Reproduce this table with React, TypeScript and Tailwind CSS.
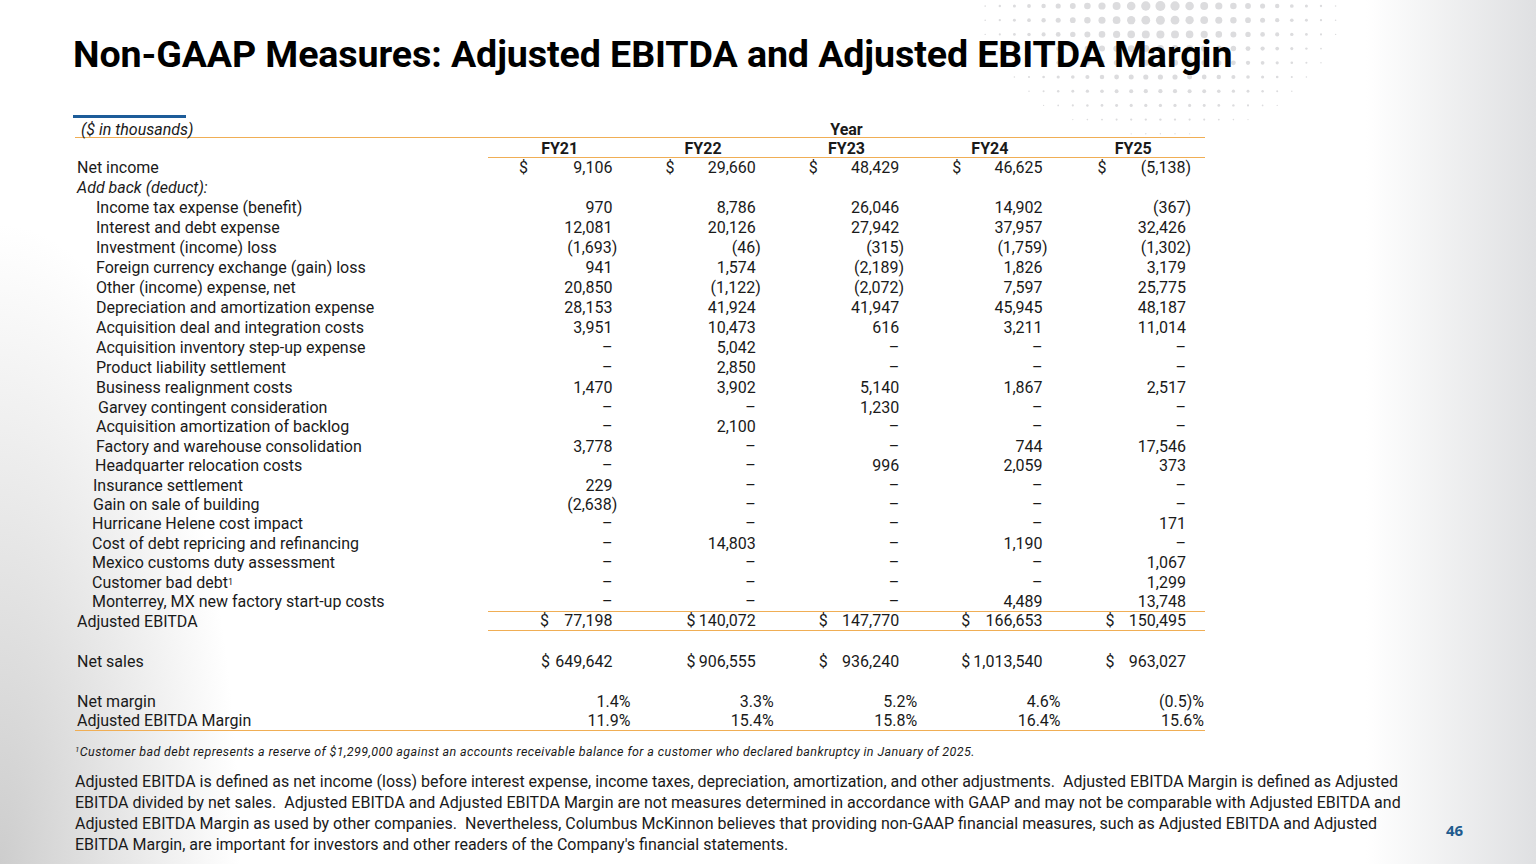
import React from "react";

type Cell = { v: string; d?: string; pct?: boolean };

const rows: { label: React.ReactNode; pl: string; h: string; cells: Cell[] }[] = [
  { label: "Net income", pl: "pl-[2px]", h: "h-[20px]", cells: [{ v: "9,106", d: "ml-[31px]" }, { v: "29,660", d: "ml-[34px]" }, { v: "48,429", d: "ml-[34px]" }, { v: "46,625", d: "ml-[34px]" }, { v: "(5,138)", d: "ml-[36px]" }] },
  { label: <i>Add back (deduct):</i>, pl: "pl-[2px]", h: "h-[20px]", cells: [] },
  { label: "Income tax expense (benefit)", pl: "pl-[21px]", h: "h-[20px]", cells: [{ v: "970" }, { v: "8,786" }, { v: "26,046" }, { v: "14,902" }, { v: "(367)" }] },
  { label: "Interest and debt expense", pl: "pl-[21px]", h: "h-[20px]", cells: [{ v: "12,081" }, { v: "20,126" }, { v: "27,942" }, { v: "37,957" }, { v: "32,426" }] },
  { label: "Investment (income) loss", pl: "pl-[21px]", h: "h-[20px]", cells: [{ v: "(1,693)" }, { v: "(46)" }, { v: "(315)" }, { v: "(1,759)" }, { v: "(1,302)" }] },
  { label: "Foreign currency exchange (gain) loss", pl: "pl-[21px]", h: "h-[20px]", cells: [{ v: "941" }, { v: "1,574" }, { v: "(2,189)" }, { v: "1,826" }, { v: "3,179" }] },
  { label: "Other (income) expense, net", pl: "pl-[21px]", h: "h-[20px]", cells: [{ v: "20,850" }, { v: "(1,122)" }, { v: "(2,072)" }, { v: "7,597" }, { v: "25,775" }] },
  { label: "Depreciation and amortization expense", pl: "pl-[21px]", h: "h-[20px]", cells: [{ v: "28,153" }, { v: "41,924" }, { v: "41,947" }, { v: "45,945" }, { v: "48,187" }] },
  { label: "Acquisition deal and integration costs", pl: "pl-[21px]", h: "h-[20px]", cells: [{ v: "3,951" }, { v: "10,473" }, { v: "616" }, { v: "3,211" }, { v: "11,014" }] },
  { label: "Acquisition inventory step-up expense", pl: "pl-[21px]", h: "h-[20px]", cells: [{ v: "–" }, { v: "5,042" }, { v: "–" }, { v: "–" }, { v: "–" }] },
  { label: "Product liability settlement", pl: "pl-[21px]", h: "h-[20px]", cells: [{ v: "–" }, { v: "2,850" }, { v: "–" }, { v: "–" }, { v: "–" }] },
  { label: "Business realignment costs", pl: "pl-[21px]", h: "h-[20px]", cells: [{ v: "1,470" }, { v: "3,902" }, { v: "5,140" }, { v: "1,867" }, { v: "2,517" }] },
  { label: "Garvey contingent consideration", pl: "pl-[23px]", h: "h-[19px]", cells: [{ v: "–" }, { v: "–" }, { v: "1,230" }, { v: "–" }, { v: "–" }] },
  { label: "Acquisition amortization of backlog", pl: "pl-[21px]", h: "h-[20px]", cells: [{ v: "–" }, { v: "2,100" }, { v: "–" }, { v: "–" }, { v: "–" }] },
  { label: "Factory and warehouse consolidation", pl: "pl-[21px]", h: "h-[19px]", cells: [{ v: "3,778" }, { v: "–" }, { v: "–" }, { v: "744" }, { v: "17,546" }] },
  { label: "Headquarter relocation costs", pl: "pl-[20px]", h: "h-[20px]", cells: [{ v: "–" }, { v: "–" }, { v: "996" }, { v: "2,059" }, { v: "373" }] },
  { label: "Insurance settlement", pl: "pl-[18px]", h: "h-[19px]", cells: [{ v: "229" }, { v: "–" }, { v: "–" }, { v: "–" }, { v: "–" }] },
  { label: "Gain on sale of building", pl: "pl-[18px]", h: "h-[19px]", cells: [{ v: "(2,638)" }, { v: "–" }, { v: "–" }, { v: "–" }, { v: "–" }] },
  { label: "Hurricane Helene cost impact", pl: "pl-[17px]", h: "h-[20px]", cells: [{ v: "–" }, { v: "–" }, { v: "–" }, { v: "–" }, { v: "171" }] },
  { label: "Cost of debt repricing and refinancing", pl: "pl-[17px]", h: "h-[19px]", cells: [{ v: "–" }, { v: "14,803" }, { v: "–" }, { v: "1,190" }, { v: "–" }] },
  { label: "Mexico customs duty assessment", pl: "pl-[17px]", h: "h-[20px]", cells: [{ v: "–" }, { v: "–" }, { v: "–" }, { v: "–" }, { v: "1,067" }] },
  { label: <>Customer bad debt<sup className="text-[9px] relative -top-[1px]">1</sup></>, pl: "pl-[17px]", h: "h-[19px]", cells: [{ v: "–" }, { v: "–" }, { v: "–" }, { v: "–" }, { v: "1,299" }] },
  { label: "Monterrey, MX new factory start-up costs", pl: "pl-[17px]", h: "h-[19px]", cells: [{ v: "–" }, { v: "–" }, { v: "–" }, { v: "4,489" }, { v: "13,748" }] },
];

const grid = "grid grid-cols-[413px_repeat(5,143.4px)]";
const line = "border-[#f0ae55]";

const NumCell = ({ c }: { c?: Cell }) => {
  if (!c) return <div />;
  const neg = c.v.startsWith("(");
  if (c.pct) {
    return <div className="flex items-center justify-end pr-[1px]">{c.v}</div>;
  }
  return (
    <div className={`flex items-center ${neg ? "pr-[14px]" : "pr-[19px]"}`}>
      {c.d && <span className={c.d}>$</span>}
      <span className="ml-auto">{c.v}</span>
    </div>
  );
};

const Dots = () => {
  const dots: { x: number; y: number; r: number }[] = [];
  for (let i = 0; i < 30; i++) {
    for (let j = 0; j < 12; j++) {
      const x = 6 + i * 14.6;
      const y = 6 + j * 14.2;
      const dx = (x - 210) / 210;
      const dy = (y - 5) / 150;
      const d = Math.sqrt(dx * dx + dy * dy);
      const r = 5 * (1 - d);
      if (r > 0.6) dots.push({ x, y, r });
    }
  }
  return (
    <svg width="440" height="175" className="absolute left-[950px] top-0">
      {dots.map((p, k) => (
        <circle key={k} cx={p.x} cy={p.y} r={p.r} fill="#dcdcde" />
      ))}
    </svg>
  );
};

export default function App() {
  return (
    <div className="relative w-[1536px] h-[864px] overflow-hidden bg-white bg-[linear-gradient(to_left,#dfe0e2_0px,rgba(255,255,255,0)_170px),radial-gradient(ellipse_240px_640px_at_0%_100%,#cdcdcd,rgba(255,255,255,0))] font-['Roboto',sans-serif] text-[#1a1a1a]">
      <Dots />
      <div className="relative pl-[73px] pt-[32px]">
        <h1 className="text-[37.6px] leading-[44px] font-bold text-black tracking-[-0.1px]">
          Non-GAAP Measures: Adjusted EBITDA and Adjusted EBITDA Margin
        </h1>
        <div className="mt-[39px] w-[113px] h-[3px] bg-[#1d5c99]" />
      </div>

      <div className="relative ml-[75px] w-[1130px] text-[16px] leading-none">
        <div className={`${grid} h-[19px] items-center pt-[4px]`}>
          <div className="pl-[6px] italic">($ in thousands)</div>
          <div className="col-span-5 text-center font-bold">Year</div>
        </div>
        <div className="h-[1px] bg-[#f0ae55]" />
        <div className={`${grid} h-[19px] items-center`}>
          <div />
          {["FY21", "FY22", "FY23", "FY24", "FY25"].map((y) => (
            <div key={y} className="text-center font-bold h-full flex items-center justify-center pt-[3px]">
              {y}
            </div>
          ))}
        </div>
        <div className="ml-[413px] h-[1px] bg-[#f0ae55]" />
        {rows.map((r, i) => (
          <div key={i} className={`${grid} ${r.h} items-stretch`}>
            <div className={`${r.pl} flex items-center whitespace-nowrap`}>{r.label}</div>
            {[0, 1, 2, 3, 4].map((k) => (
              <NumCell key={k} c={r.cells[k]} />
            ))}
          </div>
        ))}
        <div className="ml-[413px] h-[1px] bg-[#f0ae55]" />
        <div className={`${grid} h-[19px]`}>
          <div className="pl-[2px] flex items-center">Adjusted EBITDA</div>
          {[
            ["ml-[52px]", "77,198"],
            ["ml-[55px]", "140,072"],
            ["ml-[44px]", "147,770"],
            ["ml-[43px]", "166,653"],
            ["ml-[44px]", "150,495"],
          ].map(([d, v], k) => (
            <div key={k} className={`flex items-center pr-[19px] border-b ${line}`}>
              <span className={d}>$</span>
              <span className="ml-auto">{v}</span>
            </div>
          ))}
        </div>
        <div className={`${grid} h-[20px] mt-[21px]`}>
          <div className="pl-[2px] flex items-center">Net sales</div>
          {[
            ["ml-[53px]", "649,642"],
            ["ml-[55px]", "906,555"],
            ["ml-[44px]", "936,240"],
            ["ml-[43px]", "1,013,540"],
            ["ml-[44px]", "963,027"],
          ].map(([d, v], k) => (
            <div key={k} className="flex items-center pr-[19px]">
              <span className={d}>$</span>
              <span className="ml-auto">{v}</span>
            </div>
          ))}
        </div>
        <div className={`${grid} h-[20px] mt-[20px]`}>
          <div className="pl-[2px] flex items-center">Net margin</div>
          {["1.4%", "3.3%", "5.2%", "4.6%", "(0.5)%"].map((v, k) => (
            <NumCell key={k} c={{ v, pct: true }} />
          ))}
        </div>
        <div className={`${grid} h-[19px] border-b ${line}`}>
          <div className="pl-[2px] flex items-center">Adjusted EBITDA Margin</div>
          {["11.9%", "15.4%", "15.8%", "16.4%", "15.6%"].map((v, k) => (
            <NumCell key={k} c={{ v, pct: true }} />
          ))}
        </div>
      </div>

      <p className="relative ml-[75px] mt-[12px] text-[12.5px] italic tracking-[0.4px] text-[#1a1a1a]">
        <sup className="text-[8px]">1</sup>Customer bad debt represents a reserve of $1,299,000 against an accounts receivable balance for a customer who declared bankruptcy in January of 2025.
      </p>

      <div className="relative ml-[75px] mt-[9px] text-[16px] leading-[21px] text-[#1a1a1a] whitespace-pre">
        <div>Adjusted EBITDA is defined as net income (loss) before interest expense, income taxes, depreciation, amortization, and other adjustments.  Adjusted EBITDA Margin is defined as Adjusted</div>
        <div>EBITDA divided by net sales.  Adjusted EBITDA and Adjusted EBITDA Margin are not measures determined in accordance with GAAP and may not be comparable with Adjusted EBITDA and</div>
        <div>Adjusted EBITDA Margin as used by other companies.  Nevertheless, Columbus McKinnon believes that providing non-GAAP financial measures, such as Adjusted EBITDA and Adjusted</div>
        <div>EBITDA Margin, are important for investors and other readers of the Company's financial statements.</div>
      </div>

      <div className="absolute left-[1446px] top-[819px] text-[15px] font-bold text-[#1f5b8e] font-['Open_Sans',sans-serif]">
        46
      </div>
    </div>
  );
}
